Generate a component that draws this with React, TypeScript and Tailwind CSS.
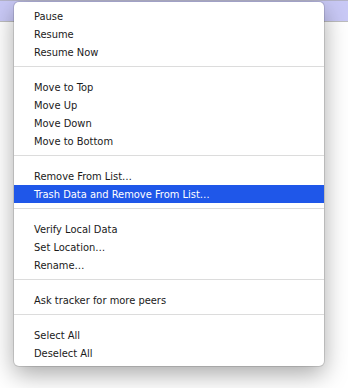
import React from "react";

type Entry = { label: string; active?: boolean } | "sep";

const entries: Entry[] = [
  { label: "Pause" },
  { label: "Resume" },
  { label: "Resume Now" },
  "sep",
  { label: "Move to Top" },
  { label: "Move Up" },
  { label: "Move Down" },
  { label: "Move to Bottom" },
  "sep",
  { label: "Remove From List…" },
  { label: "Trash Data and Remove From List…", active: true },
  "sep",
  { label: "Verify Local Data" },
  { label: "Set Location…" },
  { label: "Rename…" },
  "sep",
  { label: "Ask tracker for more peers" },
  "sep",
  { label: "Select All" },
  { label: "Deselect All" },
];

export default function App() {
  return (
    <div className="relative w-[348px] h-[388px] overflow-hidden bg-white">
      {/* window behind the menu */}
      <div className="h-[22px] bg-[#c9c9f6] border-t border-[#b4b4c8] border-b border-b-[#bdbdbd]" />

      {/* context menu */}
      <div
        className="absolute left-[14px] top-[2px] w-[310px] rounded-[5px] bg-white pt-[5px] pb-[4px] shadow-[0_8px_24px_rgba(0,0,0,0.35),0_0_0_1px_rgba(0,0,0,0.12)]"
        style={{ fontFamily: '"DejaVu Sans Condensed", "DejaVu Sans", sans-serif' }}
      >
        {entries.map((e, i) =>
          e === "sep" ? (
            <div key={i} className="h-[17px] pt-[5px]">
              <div className="h-px w-full bg-[#dcdcdc]" />
            </div>
          ) : (
            <div
              key={i}
              className={
                e.active
                  ? "h-[18px] flex items-center pl-[20px] pt-[3px] text-[11px] text-white bg-[#1f57e9]"
                  : "h-[18px] flex items-center pl-[20px] pt-[3px] text-[11px] text-[#1a1a1a]"
              }
            >
              {e.label}
            </div>
          )
        )}
      </div>
    </div>
  );
}
